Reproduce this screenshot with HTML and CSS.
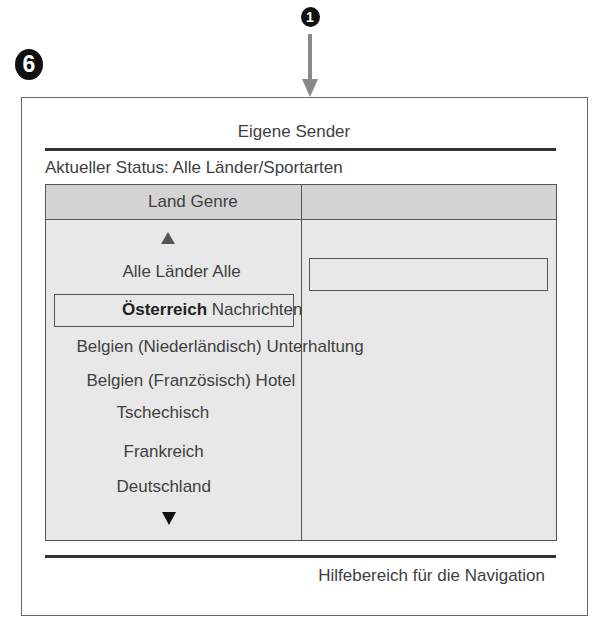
FILE: index.html
```html
<!DOCTYPE html>
<html lang="de">
<head>
<meta charset="utf-8">
<link rel="stylesheet" href="styles.css">
</head>
<body>
<div class="callouts">
  <div class="mark6">6</div>
  <div class="pointer">
    <div class="mark1">1</div>
    <svg class="arrow" width="18" height="63" viewBox="0 0 18 63"><rect x="7" y="0" width="4" height="46" fill="#8a8a8a"/><polygon points="1,45 17,45 9,63" fill="#8a8a8a"/></svg>
  </div>
</div>
<div class="frame">
  <div class="title">Eigene Sender</div>
  <div class="rule"></div>
  <div class="status">Aktueller Status: Alle Länder/Sportarten</div>
  <div class="table">
    <div class="head">
      <div class="hcell left">Land Genre</div>
      <div class="hcell right"></div>
    </div>
    <div class="body">
      <div class="col left">
        <div class="row r-up"><svg width="14" height="12" viewBox="0 0 14 12"><polygon points="7,0 14,12 0,12" fill="#555"/></svg></div>
        <div class="row r-all">Alle Länder Alle</div>
        <div class="row r-sel"><span class="sel-text"><b>Österreich</b> Nachrichten</span></div>
        <div class="row r-bnl">Belgien (Niederländisch) Unterhaltung</div>
        <div class="row r-bfr">Belgien (Französisch) Hotel</div>
        <div class="row r-cz">Tschechisch</div>
        <div class="row r-fr">Frankreich</div>
        <div class="row r-de">Deutschland</div>
        <div class="row r-down"><svg width="14" height="13" viewBox="0 0 14 13"><polygon points="0,0 14,0 7,13" fill="#111"/></svg></div>
      </div>
      <div class="col right">
        <div class="field"></div>
      </div>
    </div>
  </div>
  <div class="rule bottom"></div>
  <div class="help">Hilfebereich für die Navigation</div>
</div>
</body>
</html>
```

FILE: styles.css
```css
* { box-sizing: border-box; }
html, body { margin: 0; padding: 0; background: #fff; }
body {
  width: 595px;
  height: 621px;
  font-family: "Liberation Sans", Arial, sans-serif;
  color: #404040;
  font-size: 17px;
  line-height: 20px;
}
.callouts {
  height: 97px;
  display: flex;
  align-items: flex-start;
}
.mark6 {
  margin: 49px 0 0 15px;
  width: 28px;
  height: 31px;
  border-radius: 50%;
  background: #111;
  color: #fff;
  font-weight: bold;
  font-size: 23px;
  line-height: 31px;
  text-align: center;
}
.pointer {
  margin-left: 258px;
  width: 18px;
  display: flex;
  flex-direction: column;
  align-items: center;
}
.mark1 {
  margin-top: 7px;
  width: 19px;
  height: 20px;
  border-radius: 50%;
  background: #111;
  color: #fff;
  font-weight: bold;
  font-size: 14px;
  line-height: 20px;
  text-align: center;
}
.arrow { display: block; margin-top: 7px; }
.frame {
  margin-left: 21px;
  width: 567px;
  height: 519px;
  border: 1px solid #666;
  padding: 0 30px 0 23px;
}
.title {
  height: 50px;
  padding: 24px 0 0 0;
  text-align: center;
  margin-right: 14px;
}
.rule {
  height: 3px;
  background: #333;
  margin-right: 1px;
}
.status {
  height: 33px;
  padding-top: 7px;
  white-space: nowrap;
}
.table {
  width: 512px;
  border: 1.5px solid #555;
}
.head {
  display: flex;
  height: 34.5px;
  background: #d3d3d3;
  border-bottom: 1.5px solid #555;
}
.hcell { line-height: 33px; }
.hcell.left {
  width: 256px;
  border-right: 1.5px solid #555;
  padding-left: 102px;
}
.hcell.right { flex: 1; }
.body {
  display: flex;
  height: 320.5px;
  background: #e8e8e8;
}
.col.left {
  width: 256px;
  border-right: 1.5px solid #555;
  position: relative;
  z-index: 1;
}
.col.right { flex: 1; padding: 38px 0 0 7px; }
.field {
  width: 239px;
  height: 33px;
  border: 1.5px solid #555;
}
.row {
  white-space: nowrap;
  display: flex;
  align-items: center;
}
.r-up { height: 36px; padding-left: 114.5px; }
.r-all { height: 32px; padding-left: 76.5px; }
.r-sel {
  margin: 6px 0 0 7.5px;
  width: 240px;
  height: 33px;
  border: 1.5px solid #555;
  padding-left: 67.5px;
}
.r-bnl { margin-top: 3px; height: 34px; padding-left: 30.5px; }
.r-bfr { height: 34px; padding-left: 40.5px; }
.r-cz { height: 30px; padding-left: 70.5px; }
.r-fr { margin-top: 6px; height: 36px; padding-left: 77.5px; }
.r-de { height: 34px; padding-left: 70.5px; }
.r-down { height: 30px; padding-left: 115.5px; }
.row svg { display: block; }
.sel-text b { color: #222; }
.rule.bottom { margin-top: 14px; }
.help {
  text-align: right;
  padding: 8px 12px 0 0;
  white-space: nowrap;
}
```
